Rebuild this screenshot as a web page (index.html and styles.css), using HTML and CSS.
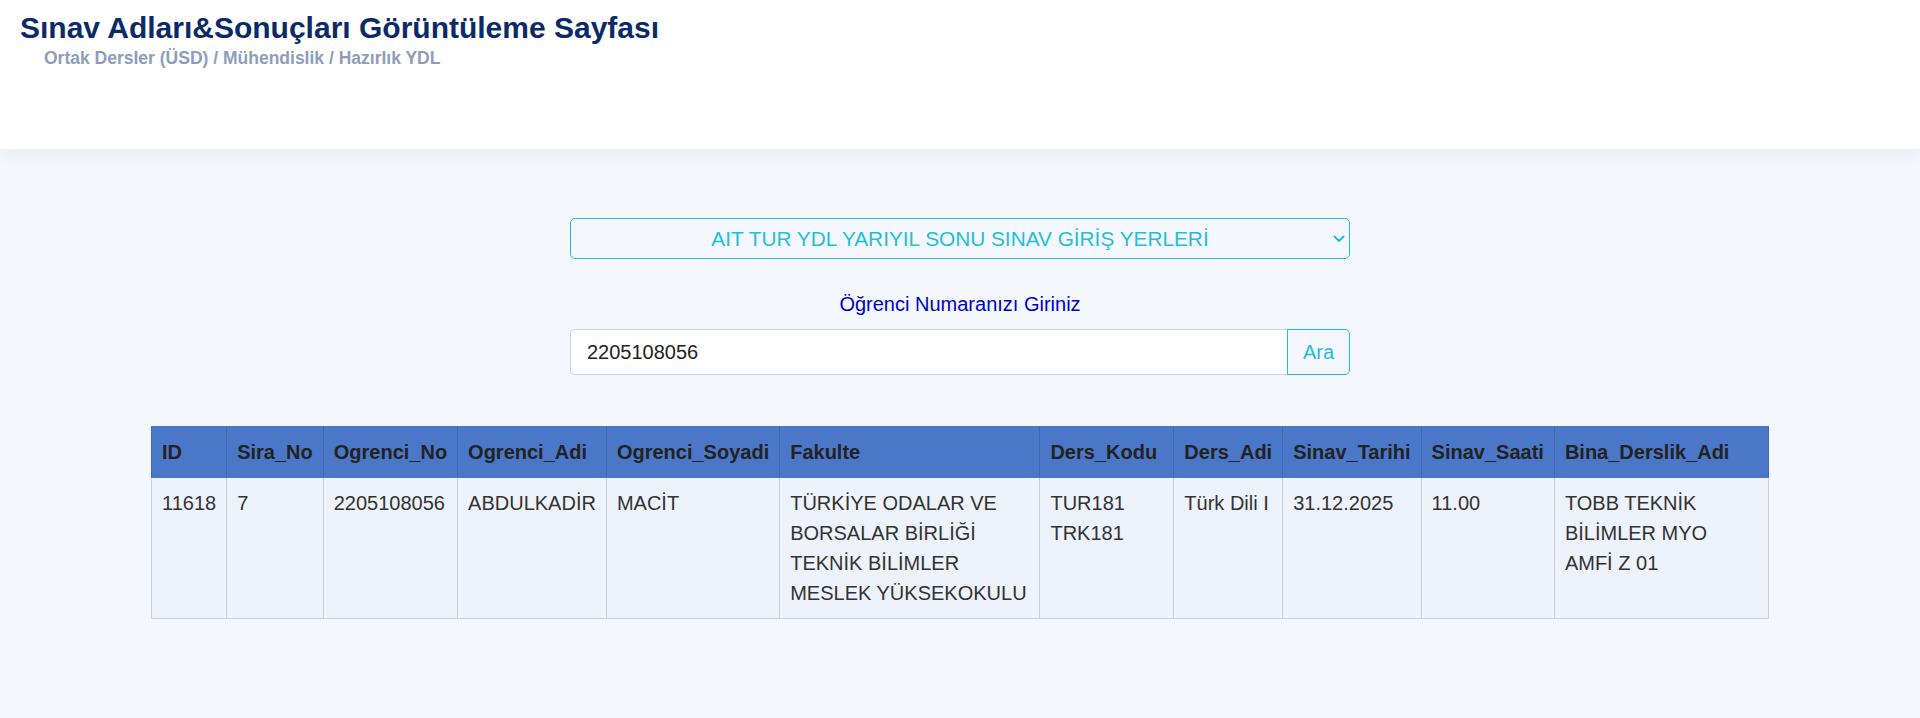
FILE: index.html
```html
<!DOCTYPE html>
<html lang="tr">
<head>
    <meta charset="utf-8">
    <title>Sınav Adları&amp;Sonuçları Görüntüleme Sayfası</title>
    <link rel="stylesheet" href="styles.css">
</head>
<body>
    <header class="page-header">
        <h1>Sınav Adları&amp;Sonuçları Görüntüleme Sayfası</h1>
        <p class="subtitle">Ortak Dersler (ÜSD) / Mühendislik / Hazırlık YDL</p>
    </header>

    <main class="content">
        <form class="search-form" onsubmit="return false;">
            <div class="select-wrap">
                <select class="exam-select" name="sinav">
                    <option>AIT TUR YDL YARIYIL SONU SINAV GİRİŞ YERLERİ</option>
                </select>
                <svg class="select-arrow" width="12" height="8" viewBox="0 0 12 8">
                    <path d="M1.5 1.5 L6 6 L10.5 1.5" fill="none" stroke="currentColor" stroke-width="2" stroke-linecap="round" stroke-linejoin="round"/>
                </svg>
            </div>

            <label class="no-label" for="ogrenciNo">Öğrenci Numaranızı Giriniz</label>
            <div class="input-group">
                <input id="ogrenciNo" class="no-input" type="text" value="2205108056">
                <button class="btn-search" type="submit">Ara</button>
            </div>
        </form>

        <div class="results">
            <table class="result-table">
                <thead>
                    <tr>
                        <th>ID</th>
                        <th>Sira_No</th>
                        <th>Ogrenci_No</th>
                        <th>Ogrenci_Adi</th>
                        <th>Ogrenci_Soyadi</th>
                        <th>Fakulte</th>
                        <th>Ders_Kodu</th>
                        <th>Ders_Adi</th>
                        <th>Sinav_Tarihi</th>
                        <th>Sinav_Saati</th>
                        <th>Bina_Derslik_Adi</th>
                    </tr>
                </thead>
                <tbody>
                    <tr>
                        <td>11618</td>
                        <td>7</td>
                        <td>2205108056</td>
                        <td>ABDULKADİR</td>
                        <td>MACİT</td>
                        <td>TÜRKİYE ODALAR VE BORSALAR BİRLİĞİ TEKNİK BİLİMLER MESLEK YÜKSEKOKULU</td>
                        <td>TUR181 TRK181</td>
                        <td>Türk Dili I</td>
                        <td>31.12.2025</td>
                        <td>11.00</td>
                        <td>TOBB TEKNİK BİLİMLER MYO AMFİ Z 01</td>
                    </tr>
                </tbody>
            </table>
        </div>
    </main>
</body>
</html>
```

FILE: styles.css
```css
* {
    box-sizing: border-box;
}
body {
    margin: 0;
    font-family: "Liberation Sans", Arial, sans-serif;
    background: #f4f7fd;
    color: #222;
}
.page-header {
    background: #fff;
    height: 149px;
    padding: 11px 20px 0 20px;
    box-shadow: 0 4px 18px rgba(30, 50, 110, 0.07);
}
.page-header h1 {
    margin: 0;
    font-size: 30px;
    font-weight: bold;
    color: #0b2b68;
}
.subtitle {
    margin: 3px 0 0 24px;
    font-size: 17.5px;
    font-weight: bold;
    color: #8e9dbb;
}
.content {
    padding-top: 69px;
}
.search-form {
    width: 780px;
    margin: 0 auto;
    display: flex;
    flex-direction: column;
    align-items: stretch;
}
.select-wrap {
    position: relative;
}
.exam-select {
    width: 100%;
    height: 41px;
    appearance: none;
    -webkit-appearance: none;
    background: #f4f7fd;
    border: 1px solid #1fbfdc;
    border-radius: 5px;
    color: #1fbfdc;
    font-family: inherit;
    font-size: 20.8px;
    text-align: center;
    text-align-last: center;
    padding: 0 30px;
}
.select-arrow {
    position: absolute;
    right: 5px;
    top: 17px;
    color: #1fbfdc;
    pointer-events: none;
}
.no-label {
    margin-top: 30px;
    text-align: center;
    font-size: 20px;
    line-height: 1.5;
    color: #0000cd;
}
.input-group {
    display: flex;
    margin-top: 10px;
}
.no-input {
    flex: 1;
    height: 46px;
    padding: 7px 16px;
    font-family: inherit;
    font-size: 20px;
    color: #222;
    background: #fff;
    border: 1px solid #ced4da;
    border-right: none;
    border-radius: 5px 0 0 5px;
    outline: none;
}
.btn-search {
    height: 46px;
    padding: 0 15px;
    font-family: inherit;
    font-size: 20px;
    color: #1fbfdc;
    background: transparent;
    border: 1px solid #1fbfdc;
    border-radius: 0 5px 5px 0;
    cursor: pointer;
}
.results {
    max-width: 1618px;
    margin: 51px auto 0;
}
.result-table {
    width: 100%;
    border-collapse: collapse;
    font-size: 20px;
    line-height: 1.5;
}
.result-table th,
.result-table td {
    padding: 10px;
    text-align: left;
    vertical-align: top;
}
.result-table th {
    background: #4a77c8;
    color: #222;
    font-weight: bold;
    border: 1px solid #4a77c8;
    border-left-color: #4069b4;
    border-right-color: #4069b4;
}
.result-table td {
    background: #eef2fa;
    border: 1px solid #c9ced8;
    color: #333;
}
```
